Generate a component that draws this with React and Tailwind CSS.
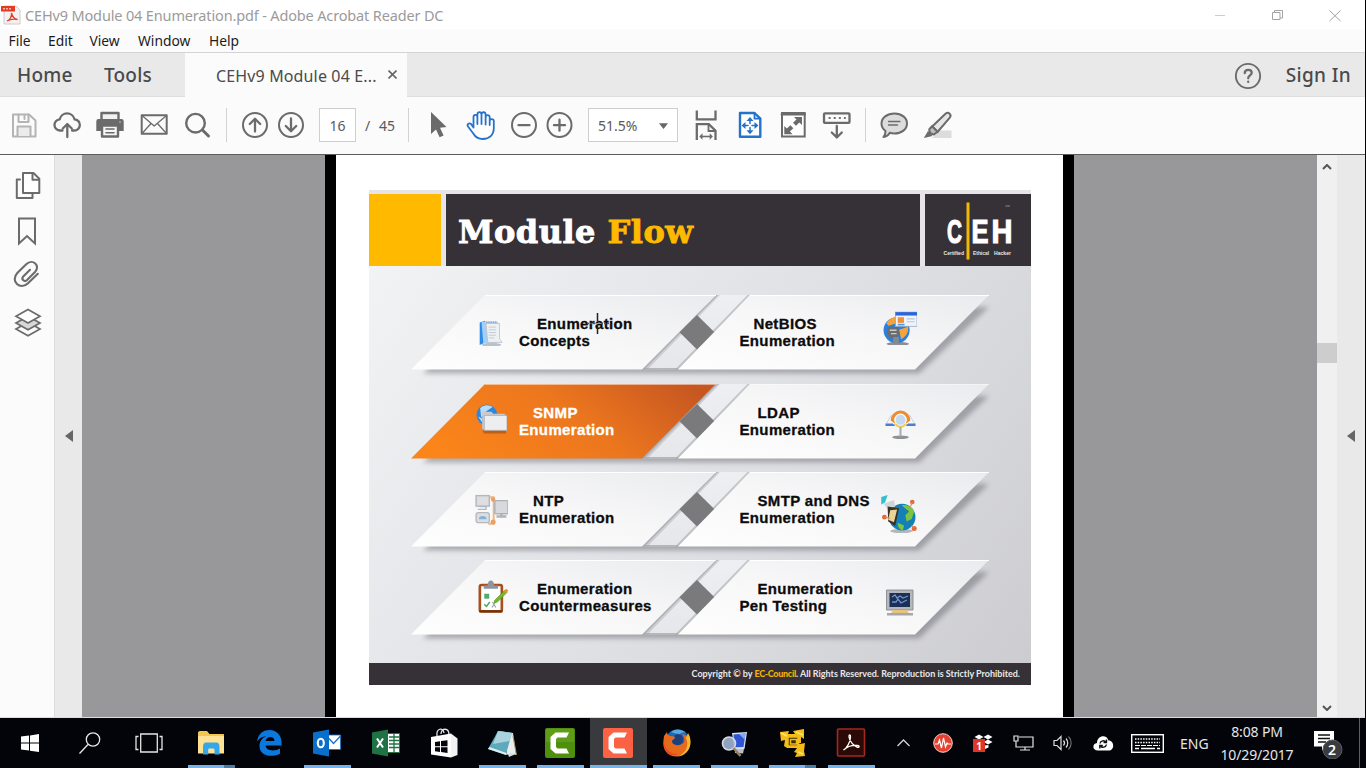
import React from "react";

const G = "#6b6b6b";

function Ico({ children, className = "", size = 30 }) {
  return (
    <svg
      className={"shrink-0 overflow-visible " + className}
      width={size}
      height={size}
      viewBox="0 0 30 30"
      fill="none"
      stroke={G}
      strokeWidth="2"
      strokeLinecap="round"
      strokeLinejoin="round"
    >
      {children}
    </svg>
  );
}

/* ---------- Window chrome ---------- */

function TitleBar() {
  return (
    <div className="flex h-[29px] items-center bg-white">
      <svg className="ml-px shrink-0" width="20" height="20" viewBox="0 0 20 20">
        <path d="M3 1h12l4 4v14H3z" fill="#f3f1f1" stroke="#cfcaca" strokeWidth="1" />
        <rect x="0" y="1" width="14" height="5.5" fill="#e23b22" />
        <path d="M2 3.8h9" stroke="#f8b5a8" strokeWidth="1.6" strokeDasharray="2 1" />
        <path d="M6 16c3-1 5-5 4.500-8c1 4 3 6 6 6.500c-4-1-7-.5-10.500 1.500z" fill="none" stroke="#e0402c" strokeWidth="1.300" />
      </svg>
      <div className="ml-1 whitespace-nowrap font-['Noto_Sans',sans-serif] text-[14.500px] leading-5 tracking-[-0.15px] text-[#9b9b9b]">
        CEHv9 Module 04 Enumeration.pdf - Adobe Acrobat Reader DC
      </div>
      <svg className="ml-auto mr-[24px] shrink-0" width="126" height="14" viewBox="0 0 126 14" fill="none" stroke="#a3a3a3">
        <path d="M0 7.500h10" stroke="#d3cccc" />
        <path d="M57.500 4.500h7.500v7h-7.500zM59.500 4.500v-2h8v7.500h-2.500" />
        <path d="M114.500 2.500l11 10.500M125.500 2.500l-11 10.500" />
      </svg>
    </div>
  );
}

function MenuBar() {
  return (
    <div className="flex h-[24px] items-center border-b border-[#d4d4d4] bg-[#fbfbfb] font-['Noto_Sans',sans-serif] text-[13.800px] leading-5 text-[#1b1b1b]">
      <span className="ml-[8.500px] w-[39.500px]">File</span>
      <span className="w-[41.500px]">Edit</span>
      <span className="w-[48.500px]">View</span>
      <span className="w-[71px]">Window</span>
      <span>Help</span>
    </div>
  );
}

function TabBar() {
  return (
    <div className="flex h-[44px] bg-[#e9e9e9] font-['Noto_Sans',sans-serif] text-[#4a4a4a]">
      <div className="flex w-[185px] items-center border-b border-[#dedede] pt-px text-[19px] font-medium">
        <span className="ml-[17px] w-[87px] tracking-[0.2px]">Home</span>
        <span className="tracking-[0.2px]">Tools</span>
      </div>
      <div className="flex w-[222px] items-center bg-[#fbfbfb] pl-[31px] pt-[2px]">
        <span className="w-[172px] whitespace-nowrap text-[16px] tracking-[0.14px]">CEHv9 Module 04 E...</span>
        <svg className="-mt-[3px]" width="9" height="9" viewBox="0 0 9 9" stroke="#666" strokeWidth="1.600">
          <path d="M.5.5l8 8M8.500.5l-8 8" />
        </svg>
      </div>
      <div className="flex flex-1 items-center justify-end border-b border-[#dedede] pt-[2px]">
        <Ico size={28}>
          <circle cx="15" cy="15" r="13" />
          <path d="M11.500 12c0-5 7.500-4.500 7.500-.5c0 2.800-3.800 3-3.800 6M15.200 21v.3" strokeWidth="2.400" />
        </Ico>
        <span className="ml-[24px] mr-[14px] text-[19px] font-medium tracking-[0.350px]">Sign In</span>
      </div>
    </div>
  );
}

function Divider({ className }) {
  return <div className={"h-[34px] w-px shrink-0 bg-[#d2d2d2] " + className} />;
}

function Toolbar() {
  return (
    <div className="flex h-[58px] items-center border-b border-[#5c5c5c] bg-[#fbfbfb] pb-px font-['Noto_Sans',sans-serif] text-[#5a5a5a]">
      <Ico className="ml-[9px]">
        <g stroke="#b4b4b4">
          <path d="M4 4.500h16l6.500 6V26.500H4z" />
          <path d="M9.500 4.500v7.500h10V4.500" />
          <path d="M15.500 6v3" />
          <path d="M8.500 26v-9.500h13V26" fill="#ececec" />
        </g>
      </Ico>
      <Ico className="ml-[13px]">
        <path d="M10.500 20.500H8.500a5.600 5.600 0 0 1-.8-11.200a7.600 7.600 0 0 1 14.800 0a5.600 5.600 0 0 1-.5 11.200h-2" strokeWidth="2.300" />
        <path d="M15.300 27V14.500M10.800 18.500l4.500-4.500l4.500 4.500" strokeWidth="2.300" />
      </Ico>
      <Ico className="ml-[13px]">
        <path d="M6.500 9.500V3h17v6.500" strokeWidth="2.400" fill="#f1f1f1" />
        <path d="M3.500 9h23a2.200 2.200 0 0 1 2.200 2.200V21H1.300v-9.800A2.200 2.200 0 0 1 3.500 9z" fill={G} stroke="none" />
        <path d="M7 15.500h16V26.500H7z" fill="#f6f6f6" strokeWidth="2.400" />
        <path d="M11 19h8M11 22.700h8" strokeWidth="1.600" />
        <circle cx="25" cy="12" r=".7" fill="#ddd" stroke="none" />
      </Ico>
      <Ico className="ml-[14px]">
        <rect x="2.700" y="5.300" width="25" height="18.500" />
        <path d="M3 5.500l12.200 10.500L27.500 5.500M3 23.500l9-10M27.500 23.500l-9-10" strokeWidth="1.300" />
      </Ico>
      <Ico className="ml-[13px]">
        <circle cx="13.500" cy="13.200" r="9.300" strokeWidth="2.400" />
        <path d="M20.500 20l6 6" strokeWidth="3" />
      </Ico>
      <Divider className="ml-[14px]" />
      <Ico className="ml-[13px]">
        <circle cx="15" cy="15" r="12" />
        <path d="M15 21.500V9M9.800 14L15 8.800l5.200 5.200" strokeWidth="2.300" />
      </Ico>
      <Ico className="ml-[6px]">
        <circle cx="15" cy="15" r="12" />
        <path d="M15 8.500V21M9.800 16l5.200 5.200l5.200-5.200" strokeWidth="2.300" />
      </Ico>
      <div className="ml-[13px] flex h-[34px] w-[37px] items-center justify-center border border-[#cfcfcf] bg-white pt-px text-[14px]">16</div>
      <div className="flex w-[52px] items-center pl-[9px] pt-px text-[14px]">
        <span className="w-[14px]">/</span>
        <span>45</span>
      </div>
      <Divider className="" />
      <Ico className="ml-[14px]">
        <path d="M8 2v22l5-4.600l3.600 7.800l4-1.800L17 17.800l6.500-.8z" fill={G} stroke="none" />
      </Ico>
      <Ico className="ml-[13px]">
        <path
          d="M7.500 17.500V7.200c0-3 3.800-3 3.900 0V14V4.500c0-3.200 4-3.200 4.100 0V14V4.500c.2-3 4-3 4.100 0V14.500V7.200c.2-2.700 3.900-2.700 4.100 0V11c.2-2.700 3.900-2.500 4.100 0V18c0 7-4.500 11-11 11c-5 0-7.500-2-9.500-5.500L2 16.500c-1.500-2.500 1.500-4 3.200-2.300l2.300 3.300M23.700 10V15"
          stroke="#2473c8"
          strokeWidth="1.800"
          fill="#fff"
        />
      </Ico>
      <Ico className="ml-[13px]">
        <circle cx="15" cy="15" r="12" />
        <path d="M9.500 15.200h11" strokeWidth="2.300" />
      </Ico>
      <Ico className="ml-[5px]">
        <circle cx="15.500" cy="15" r="12" />
        <path d="M10 15.200h11M15.500 9.700v11" strokeWidth="2.300" />
      </Ico>
      <div className="ml-[14px] flex h-[34px] w-[90px] shrink-0 items-center border border-[#cfcfcf] bg-white pl-[9px] pt-px text-[14px]">
        <span className="w-[61px]">51.5%</span>
        <svg width="9" height="6" viewBox="0 0 9 6">
          <path d="M0 .3h9L4.500 6z" fill="#666" />
        </svg>
      </div>
      <Ico className="ml-[13px]">
        <g strokeLinecap="butt" strokeLinejoin="miter">
          <path d="M5.800 .5v8.800h18.700V.5" strokeWidth="2.300" />
          <path d="M5.800 30V14.200h12l6.700 6.500V30" strokeWidth="2.300" />
          <path d="M17.500 14.500v6.500h6.500" strokeWidth="1.800" />
          <path d="M10 26.500h10" strokeWidth="1.600" />
        </g>
        <path d="M11.500 23.300v6.400L8.300 26.500zM18.700 23.300v6.400l3.200-3.200z" fill={G} stroke="none" />
      </Ico>
      <Ico className="ml-[14px]">
        <g stroke="#2473c8">
          <path d="M5 3h14.500l5.800 5.700v18H5z" fill="#fff" strokeWidth="2.400" />
          <path d="M19.500 3v5.700h5.800" strokeWidth="1.800" />
          <path d="M15 10v11M9.500 15.500h11" strokeWidth="1.500" strokeDasharray="3.500 4" />
          <path d="M15 7l-3.500 4h7zM15 24.300l-3.500-4h7zM6.500 15.600l4-3.500v7zM23.500 15.600l-4-3.500v7z" fill="#2473c8" stroke="none" />
        </g>
      </Ico>
      <Ico className="ml-[13px]">
        <rect x="4" y="3" width="22.700" height="23.500" fill="#fff" strokeLinejoin="miter" />
        <path d="M4 4.200h22.500" strokeWidth="2.600" />
        <path d="M16 7h8v8l-2.600-2.600l-3.400 3.400l-3-3l3.500-3.300zM6.300 16l2.600 2.600l3.500-3.300l2.900 2.900l-3.400 3.400l2.700 2.600H6.300z" fill={G} stroke="none" />
      </Ico>
      <Ico className="ml-[14px]">
        <rect x="2" y="3.300" width="25.500" height="9.600" rx="1" strokeWidth="2.300" />
        <path d="M7.500 8h15.500" strokeWidth="2.200" strokeDasharray=".3 4.800" />
        <path d="M14.800 16v11M9.800 22.500l5 5l5-5" strokeWidth="2.300" />
      </Ico>
      <Divider className="ml-[13px]" />
      <Ico className="ml-[13px]">
        <path d="M15.500 3.500c7.200 0 12.500 4.300 12.500 10s-5.300 10-12.500 10c-1.700 0-3.300-.2-4.700-.7c-1.500 2.500-3.600 4-6.300 4.300c1.300-1.700 2.100-3.900 2-6.100C4 19.200 2.500 16.500 2.500 13.500c0-5.700 5.500-10 13-10z" fill="#dcdcdc" />
        <path d="M9.500 11.500h11.500M9.500 15h9" strokeWidth="1.300" />
      </Ico>
      <Ico className="ml-[14px]">
        <path d="M9 28L17 20.500h11.500V28z" fill="#dcdcdc" stroke="none" />
        <path d="M9.200 16.500L22.500 3.800c3-2.500 6.500.8 4.300 3.800L14.500 22z" fill="#e6e6e6" />
        <path d="M9 16.300l-2.700 2.900c-.5 3 1.700 5.300 4.700 5.200l3.600-2.600z" fill="#bdbdbd" />
        <path d="M5 21l4.500 5L.8 28z" fill={G} stroke="none" />
      </Ico>
    </div>
  );
}

function LeftRail() {
  return (
    <div className="flex w-[54px] flex-col items-center bg-[#fbfbfb]">
      <Ico className="ml-[3px] mt-[15px]">
        <path d="M6 9.500H2.800V28H18.500v-4" />
        <path d="M9 3h10.500l5.800 5.800V23H9z" fill="#fff" />
        <path d="M18.500 3.500v6.300h6.300" />
      </Ico>
      <Ico className="mt-[16px]">
        <path d="M7 2.500h16V27.500l-8-7.500l-8 7.500z" strokeLinejoin="miter" />
      </Ico>
      <Ico className="mt-[13px]">
        <path d="M18.500 10l-7 7c-2 2.500 1.500 5.500 3.800 3.500L23.500 12.300c6-6.500-2.500-13.800-8.500-8L6 13c-8 8.500 3 18 10.500 10.500L26.300 14" transform="translate(-.5 .8)" strokeWidth="2.100" />
      </Ico>
      <Ico className="ml-px mt-[18px]">
        <g strokeWidth="1.700" strokeLinejoin="miter">
          <path d="M15 15.200l12 6.800l-12 6.800L3 22z" fill="#fbfbfb" />
          <path d="M15 9.200l12 6.800l-12 6.800L3 16z" fill="#d8d8d8" />
          <path d="M15 2.500l12 6.800l-12 6.800L3 9.300z" fill="#fff" />
        </g>
      </Ico>
    </div>
  );
}

/* ---------- Slide ---------- */

const NotesIcon = (
  <g>
    <ellipse cx="16" cy="28.500" rx="11" ry="2" fill="#b9c0c8" />
    <path d="M3 4l6-2v24l-6 3z" fill="#2f8ae8" />
    <path d="M5 3h18v24H7z" fill="#a4cff7" />
    <path d="M10 5h15v17l3 4H12z" fill="#eef0f3" stroke="#b7bcc4" strokeWidth=".8" />
    <path d="M10 3.500h12" stroke="#a5abb3" strokeWidth="2" strokeDasharray="1.500 1" />
    <path d="M13 9h8M13 12h8M13 15h8M13 18h8M13 21h6" stroke="#c3c8cf" strokeWidth="1" />
  </g>
);

const NetbiosIcon = (
  <g>
    <ellipse cx="13" cy="29" rx="10" ry="1.800" fill="#8c9094" />
    <circle cx="12" cy="17" r="11.500" fill="#2a7fe0" />
    <path d="M3 11c3-6 9-6 12-5l-4 5l-6 2zM13 17l9-3c1 5-2 9-6 11l-1-5z" fill="#f5a33a" />
    <path d="M5 14h8l2 5l-3 5H6l-3-4z" fill="#6a6c70" />
    <path d="M6 17h6M7 20h5" stroke="#ccc" strokeWidth="1.200" />
    <path d="M9 23h5v6H9z" fill="#86898d" />
    <rect x="11" y="1" width="19" height="12.500" fill="#eef4fd" stroke="#9aa7ba" strokeWidth=".7" />
    <rect x="11" y="1" width="19" height="3" fill="#2b66d8" />
    <rect x="13" y="5.500" width="5.500" height="5" fill="#f0913a" />
    <path d="M13 12h6" stroke="#49a0e8" strokeWidth="1.500" />
    <path d="M21 7h7M21 9.500h7" stroke="#b9c6da" strokeWidth="1" />
  </g>
);

const SnmpIcon = (
  <g>
    <circle cx="10.500" cy="10.500" r="10" fill="#2f86dd" />
    <path d="M4 4c4-4 9-3 12-1l-6 4l-5 6zM2 12l4 2v4z" fill="#b8dcf8" />
    <path d="M6 26h23v2.500H8z" fill="#9a4a10" opacity=".6" />
    <path d="M6 7.500h9l1.500 2H28v15H6z" fill="#c9cbcf" />
    <path d="M8 11h22v14.500H8z" fill="#eceef0" stroke="#a8abb1" strokeWidth=".8" />
  </g>
);

const NtpIcon = (
  <g>
    <path d="M12 3h5v24h-5M17 14h4" fill="none" stroke="#ecb98a" strokeWidth="1.800" />
    <circle cx="16.500" cy="5" r="2" fill="#ef9f5c" />
    <circle cx="16.500" cy="25.500" r="2.300" fill="#ef9f5c" />
    <rect x="1" y="1.500" width="12" height="9.500" fill="#dcdee2" stroke="#b4b7bc" strokeWidth="1.300" />
    <path d="M4 11.500h6v2.500H2.500" stroke="#b4b7bc" strokeWidth="1.300" fill="none" />
    <rect x="1" y="17" width="12" height="9" rx="2" fill="#dcdee2" stroke="#b4b7bc" strokeWidth="1.200" />
    <path d="M3.500 23a3.500 3 0 0 1 7 0z" fill="#86b2da" />
    <rect x="18" y="6" width="12" height="12" rx="1" fill="#d7d9dd" stroke="#aeb1b6" strokeWidth="1.300" />
    <path d="M19.500 20.500h9M24 18v3" stroke="#b0b3b8" strokeWidth="2.400" />
  </g>
);

const ClipIcon = (
  <g>
    <rect x="3.500" y="4.500" width="20" height="24" rx="1.500" fill="#fff" stroke="#a5501e" strokeWidth="2.400" />
    <path d="M3 28.500h21" stroke="#70330f" strokeWidth="2" />
    <path d="M7 8V5h3.500c0-6 6-6 6 0H20v3z" fill="#8f959b" />
    <rect x="7.500" y="12.500" width="4.500" height="4.500" fill="#4fae6d" />
    <path d="M7.500 22l2 2l3-4" stroke="#49a35c" strokeWidth="1.300" fill="none" />
    <path d="M14.500 25l5-8M15 20l3 5" stroke="#9aa0a5" strokeWidth="1" />
    <path d="M17 18.500L26.500 9l2 2L19.500 20l-3 .8z" fill="#74b92d" stroke="#4d8a1c" strokeWidth=".5" />
    <path d="M25 10.500l2.500-2.500l1.800 1.800L27 12z" fill="#f28a2e" />
  </g>
);

const LdapIcon = (
  <g>
    <ellipse cx="15" cy="28.300" rx="8" ry="1.700" fill="#8e9195" />
    <path d="M1 16L6 7h18l5 9z" fill="#f6f7f9" stroke="#c3c8d0" strokeWidth=".8" />
    <path d="M.5 15h7l2.500 2.500h10l2.500-2.500H29.500v2.500H.5z" fill="#4a7fd0" />
    <path d="M5.500 12a9.500 9.500 0 1 1 19 0l-4 3H9.500z" fill="#ee8d2f" />
    <circle cx="15" cy="11.500" r="5.500" fill="#c5daf0" stroke="#fff" strokeWidth="1.200" />
    <path d="M10.500 15.500c2 3.500 7 3.500 9 0" stroke="#f1cf4a" strokeWidth="2" fill="none" />
    <path d="M15 18v9.500" stroke="#a9adb3" strokeWidth="2" />
  </g>
);

const SmtpIcon = (
  <g>
    <ellipse cx="17" cy="28.500" rx="9" ry="1.700" fill="#b3b7bb" />
    <circle cx="17.500" cy="17.500" r="10.500" fill="#157fb8" />
    <path d="M17 8c5-1 9 2 10 5l-2 6l-4 2l-1-5l3-3zM14 22l5 2l-1 4c-2-.5-4-2-4-6z" fill="#7cc540" />
    <path d="M1 1.500l5-1.500l-2 6l-3 1.500z" fill="#2fc2cc" />
    <path d="M3 7l8-3l1 5l-6 2z" fill="#cfd4d9" />
    <path d="M6 9l9 1.500l-3 14L6.500 21z" fill="#3a3126" />
    <path d="M8 12l5.500-.5l-2.500 10l-4.500-2z" fill="#ecd398" />
    <circle cx="25.500" cy="5.500" r="1.800" fill="#e56a33" />
    <circle cx="3.500" cy="17.500" r="1.900" fill="#e56a33" />
    <circle cx="27" cy="26.500" r="2" fill="#e56a33" />
    <path d="M24 9l1.500-3M25 24l2 2M4 17.500l4 1" stroke="#d98a5c" strokeWidth=".9" />
  </g>
);

const PcIcon = (
  <g>
    <path d="M1.500 2h26.500v20H1.500z" fill="#b5b8bd" stroke="#7e8187" strokeWidth=".8" />
    <rect x="4.500" y="5" width="20.500" height="14" fill="#1c2f55" />
    <path d="M7 9l3-2l2 3l3-2l3 2l5-2M7 14h4l2-3l3 4l6-3" stroke="#6f93cf" strokeWidth="1.300" fill="none" />
    <path d="M8 22h14l2 3H6z" fill="#e8c47a" />
    <path d="M2 25h26v2.500H2z" fill="#a4a7ac" />
  </g>
);

function Copy({ text, dark = true }) {
  return (
    <div
      className={
        "whitespace-pre font-['Liberation_Sans',Arial,sans-serif] text-[15px] font-bold leading-[17px] tracking-[0.35px] [-webkit-text-stroke:0.3px] " +
        (dark ? "text-[#0c0c0c]" : "text-white")
      }
    >
      {text}
    </div>
  );
}

const ROWS = [
  { l: ["Enumeration", "Concepts"], li: "pl-[18px]", r: ["NetBIOS", "Enumeration"], ri: "pl-[14px]", a: NotesIcon, b: NetbiosIcon, ap: [108, 24, 27], bp: [514, 16, 34] },
  { l: ["SNMP", "Enumeration"], li: "pl-[14px]", r: ["LDAP", "Enumeration"], ri: "pl-[18px]", a: SnmpIcon, b: LdapIcon, ap: [107, 20, 31], bp: [516, 24, 31], hot: true },
  { l: ["NTP", "Enumeration"], li: "pl-[14px]", r: ["SMTP and DNS", "Enumeration"], ri: "pl-[18px]", a: NtpIcon, b: SmtpIcon, ap: [106, 22, 33], bp: [511, 23, 38] },
  { l: ["Enumeration", "Countermeasures"], li: "pl-[18px]", r: ["Enumeration", "Pen Testing"], ri: "pl-[18px]", a: ClipIcon, b: PcIcon, ap: [107, 20, 33], bp: [516, 28, 30] },
];

function Banner({ row }) {
  return (
    <div className="relative h-[88.400px] shrink-0">
      <svg className="absolute left-0 top-0 overflow-visible" width="662" height="88" viewBox="0 0 662 88">
        <path d="M54 78.500L120 12H620L550 78.500z" fill="#55555e" opacity=".42" filter="url(#soft)" />
        <path d="M347 0h34L309 74.500h-36z" fill="url(#strip)" />
        <path d="M347 0l-74 74.500h5.500L351 0z" fill="#a3a4a9" opacity=".4" />
        <path d="M347 0l-74 74.500h2.500L349 0zM381 0l-72 74.500h-3L378.500 0z" fill="#85868b" opacity=".4" />
        <path d="M273 73.800h36" stroke="#a5a6aa" strokeWidth="1.300" />
        <path d="M328 20l17.500 17.300L328 54.500L310.500 37.300z" fill="#7a7a7d" />
        <path d="M116 0h231L273 74.500H42z" fill={row.hot ? "url(#hot)" : "url(#cold)"} />
        <path d="M381 0h239L546 74.500H309z" fill="url(#cold)" />
        <path d="M116 .5h231M381 .5h239" stroke="#fff" strokeWidth="1" opacity={row.hot ? ".5" : "1"} />
        <svg x={row.ap[0]} y={row.ap[1]} width={row.ap[2]} height={row.ap[2]} viewBox="0 0 30 30">{row.a}</svg>
        <svg x={row.bp[0]} y={row.bp[1]} width={row.bp[2]} height={row.bp[2]} viewBox="0 0 30 30">{row.b}</svg>
      </svg>
      <div className="relative flex pl-[150px] pt-[20px]">
        <div className="w-[220.500px]">
          <div className={row.li}><Copy text={row.l[0]} dark={!row.hot} /></div>
          <Copy text={row.l[1]} dark={!row.hot} />
        </div>
        <div>
          <div className={row.ri}><Copy text={row.r[0]} /></div>
          <Copy text={row.r[1]} />
        </div>
      </div>
    </div>
  );
}

function CehLogo() {
  return (
    <svg width="106" height="72" viewBox="0 0 106 72" className="font-['Liberation_Sans',Arial,sans-serif] font-bold">
      <g fill="#fff" stroke="#fff" strokeWidth="1.200" fontSize="34">
        <text x="22" y="49" textLength="15" lengthAdjust="spacingAndGlyphs">C</text>
        <text x="46.500" y="49" textLength="17" lengthAdjust="spacingAndGlyphs">E</text>
        <text x="66.500" y="49" textLength="21" lengthAdjust="spacingAndGlyphs">H</text>
      </g>
      <path d="M43 8.500v57" stroke="#f5b800" strokeWidth="3" />
      <g fill="#e8e8e8" fontSize="5">
        <text x="18.500" y="61" textLength="20.500" lengthAdjust="spacingAndGlyphs">Certified</text>
        <text x="48" y="61" textLength="16" lengthAdjust="spacingAndGlyphs">Ethical</text>
        <text x="69" y="61" textLength="17" lengthAdjust="spacingAndGlyphs">Hacker</text>
      </g>
      <path d="M80.500 12h4.500" stroke="#8c8a8e" />
    </svg>
  );
}

function Slide() {
  return (
    <div className="relative flex h-[495px] w-[662px] flex-col bg-[linear-gradient(125deg,#f4f5f6_0%,#e6e7ea_35%,#dbdce0_65%,#cbcbd0_100%)]">
      <svg className="absolute" width="0" height="0">
        <defs>
          <filter id="soft" x="-5%" y="-20%" width="110%" height="150%"><feGaussianBlur stdDeviation="2.500" /></filter>
          <linearGradient id="cold" x1="0" y1="1" x2="1" y2="0">
            <stop offset="0" stopColor="#fefefe" /><stop offset=".5" stopColor="#f7f7f8" /><stop offset="1" stopColor="#eaebee" />
          </linearGradient>
          <linearGradient id="hot" x1="0" y1=".6" x2="1" y2=".3">
            <stop offset="0" stopColor="#fb8519" /><stop offset=".55" stopColor="#ec761e" /><stop offset="1" stopColor="#c65721" />
          </linearGradient>
          <linearGradient id="strip" x1="0" y1="0" x2="0" y2="1">
            <stop offset="0" stopColor="#eeeff2" /><stop offset="1" stopColor="#e6e7ea" />
          </linearGradient>
        </defs>
      </svg>
      <div className="flex h-[76px] shrink-0 gap-[5px] bg-[#e6e4e9] pt-[4px]">
        <div className="w-[72px] bg-[#ffba00]" />
        <div className="flex w-[474px] items-center bg-[#353137] pl-[12px] pt-[4px]">
          <h1 className="whitespace-nowrap font-['DejaVu_Serif',serif] text-[32px] font-bold leading-10 tracking-[0.5px] text-white [-webkit-text-stroke:0.9px]">
            Module <span className="text-[#ffba00]">Flow</span>
          </h1>
        </div>
        <div className="w-[106px] bg-[#353137]"><CehLogo /></div>
      </div>
      <div className="flex flex-1 flex-col pt-[29.300px]">
        {ROWS.map((row, i) => <Banner key={i} row={row} />)}
      </div>
      <div className="flex h-[22px] shrink-0 items-center justify-end whitespace-pre bg-[#353137] pr-[11px] font-['Lato',sans-serif] text-[9px] font-bold tracking-[-0.01px] text-[#e9e9e9]">
        Copyright © by <span className="font-['Lato',sans-serif] font-black tracking-[-0.3px] text-[#f5b000]">EC-Council</span>. All Rights Reserved. Reproduction is Strictly Prohibited.
      </div>
      <svg className="absolute left-[218px] top-[123px]" width="24" height="23" viewBox="0 0 24 23" stroke="#222">
        <path d="M10.500 0v8M10.500 13v8" strokeWidth="1.500" />
        <path d="M0 10.500h8M14 10.500h9" stroke="#555" strokeWidth="1.500" strokeDasharray="2 1" />
        <path d="M8 10.500h6" stroke="#999" />
      </svg>
    </div>
  );
}

function Viewer() {
  return (
    <div className="flex h-[563px] border-b border-[#dcdcdc] bg-[#e9e9e9]">
      <LeftRail />
      <div className="flex w-[28px] items-center justify-center border-l border-[#dcdcdc]">
        <svg width="8" height="12" viewBox="0 0 8 12"><path d="M8 0v12L0 6z" fill="#666" /></svg>
      </div>
      <div className="flex w-[1235px] bg-[#98989a] pl-[243px]">
        <div className="flex w-[749px] border-x-[11px] border-black bg-white pl-[33px] pt-[35px]">
          <Slide />
        </div>
      </div>
      <div className="flex w-[20px] flex-col items-center bg-[#f0f0f0] pb-[6px] pt-[9px]">
        <svg width="10" height="6" viewBox="0 0 10 6" fill="none" stroke="#555" strokeWidth="2"><path d="M1 5l4-4l4 4" /></svg>
        <div className="mt-[173px] h-[20px] w-full bg-[#cdcdcd]" />
        <svg className="mt-auto" width="10" height="6" viewBox="0 0 10 6" fill="none" stroke="#555" strokeWidth="2"><path d="M1 1l4 4l4-4" /></svg>
      </div>
      <div className="flex flex-1 items-center justify-center">
        <svg width="8" height="12" viewBox="0 0 8 12"><path d="M8 0v12L0 6z" fill="#666" /></svg>
      </div>
    </div>
  );
}

/* ---------- Taskbar ---------- */

function Task({ children, open, split, active }) {
  return (
    <div className={"flex w-[58.200px] shrink-0 flex-col items-center " + (active ? "bg-[#393a3d] bg-clip-content px-px" : "")}>
      <div className="flex h-[47px] items-center pt-[3px]">
        <svg width="30" height="30" viewBox="0 0 30 30" fill="none">{children}</svg>
      </div>
      {open && (
        <div className={"flex h-[3px] justify-end bg-[#76b3e8] " + (active ? "w-full" : "w-[47px]")}>
          {split && <div className="w-[11px] bg-[#4b7ca8]" />}
        </div>
      )}
    </div>
  );
}

function Taskbar() {
  return (
    <div className="flex h-[50px] bg-[#03040a] text-white">
      <div className="flex w-[182px] shrink-0 items-center">
        <svg className="ml-[21px]" width="18" height="18" viewBox="0 0 18 18" fill="#fff">
          <path d="M0 2.600l8-1.100v7H0zM9 1.400L18 0v8.500H9zM0 9.500h8v7l-8-1.100zM9 9.500h9V18l-9-1.300z" />
        </svg>
        <svg className="ml-[40px]" width="22" height="22" viewBox="0 0 22 22" fill="none" stroke="#e8e8e8" strokeWidth="1.300">
          <circle cx="14" cy="7.500" r="6.700" /><path d="M9 12.500L.5 21.500" />
        </svg>
        <svg className="ml-[34px]" width="28" height="20" viewBox="0 0 28 20" fill="none" stroke="#e5e5e5" strokeWidth="1.300">
          <path d="M5.700 1h16.600v18H5.700zM3.500 3.500H1v13h2.500M24.500 3.500h2.500v13h-2.500" />
        </svg>
      </div>
      <Task open split>
        <path d="M2 5c0-1 .5-2 2-2h7l2.500 3H27c1 0 1 .5 1 1v18H2z" fill="#f3c64f" />
        <path d="M2 8h26v17.500H2z" fill="#ffe294" />
        <path d="M7 26.500V19c0-3 1-4.500 3-4.500h10.500c2 0 3 1.500 3 4.500v7.500h-5V22c0-1-.5-1.500-1.300-1.500h-3.700c-.8 0-1.300.5-1.300 1.500v4.500z" fill="#35a7e6" />
      </Task>
      <Task>
        <path d="M3 13.500C4.500 5 9.500 2 15.500 2C23 2 27.500 8 27.500 14v3.500H11.500c.3 5 8.500 6.500 14.500 3v5.300C17.500 30 5.500 28 5.500 18c0-5 3-8 6.500-9.700C8.500 8.500 5.500 10 3 13.500zM11.500 13h9c0-5.500-8-5.500-9 0z" fill="#0a78dc" />
      </Task>
      <Task open>
        <path d="M13 7h15.500v14.500H13z" fill="#fff" stroke="#1770c4" strokeWidth=".8" />
        <path d="M17 10.500l4.500 5L28.500 8" stroke="#1770c4" strokeWidth="1.300" />
        <path d="M1 4.500L17 1.500v27L1 25.500z" fill="#0a6fca" />
        <ellipse cx="8.800" cy="15" rx="3" ry="4.300" stroke="#fff" strokeWidth="2.100" />
      </Task>
      <Task>
        <path d="M14 5.500h14.500v19H14z" fill="#fff" stroke="#1f7244" />
        <path d="M18 9h10M18 12.500h10M18 16h10M18 19.500h10M23 6v18" stroke="#1f7244" strokeWidth="1.300" />
        <path d="M1 4.500L17 1.500v27L1 25.500z" fill="#1f7244" />
        <path d="M6 10.500l6 9M12 10.500l-6 9" stroke="#fff" strokeWidth="2" />
      </Task>
      <Task>
        <path d="M8 8C7 0 14-1 15 5M12 6c0-6 8-7 8 1" stroke="#e8e8e8" strokeWidth="1.300" />
        <path d="M2 9L22 5.500v24L2 26.500z" fill="#fff" />
        <path d="M22 5.500l6.500 5V27L22 29.500z" fill="#f2f2f2" />
        <path d="M6 14l5-.7v4.900H6zM12 13l6.500-.8v6H12zM6 19.200h5V24l-5-.7zM12 19.200h6.500v5.700L12 24z" fill="#05060b" />
      </Task>
      <Task open>
        <path d="M12 3l14 2l3 21l-7 3z" fill="#cfdbe0" />
        <path d="M11 3l14 2l-6 22L1 21z" fill="#5fa9bc" />
        <path d="M11 3l14 2l-2.500 8L6 16z" fill="#a9d3dd" />
        <path d="M1 21l18 6l.5-2L2.500 19z" fill="#d8eef2" />
        <path d="M25 5l-6 22l6-2l4 2z" fill="#e9ecec" />
        <path d="M26 8l3.500 19" stroke="#a98d57" strokeWidth="1" />
      </Task>
      <Task open>
        <rect x="0" y="0" width="30" height="30" rx="2" fill="#4f8f0e" />
        <path d="M1 1h28v13H1z" fill="#66a31c" opacity=".7" />
        <path d="M24 4.500l-2.500 5H12.500L11 11v8l1.500 1.500H21.500l2.500 5H10.500l-5-4.500V9l5-4.500z" fill="#fff" />
      </Task>
      <Task open active>
        <rect x="0" y="0" width="30" height="30" rx="2" fill="#fb6143" />
        <path d="M24 4.500l-2.500 5H12.500L11 11v8l1.500 1.500H21.500l2.500 5H10.500l-5-4.500V9l5-4.500z" fill="#fff" />
      </Task>
      <Task open>
        <circle cx="15.500" cy="14" r="12.500" fill="#2067b5" />
        <path d="M9 4c4-4 12-3 15 1c-3-1-5 0-6 1c-4 0-6-1-9-2z" fill="#57a9df" />
        <path d="M2 8l3-4c0 2 1 3 3 4l5 .5c1 2-2 3-3 4c3 6 9 5 12 2c1-3 0-6-2-9c7 3 6 6 7 2c3 8 0 20-11 21C5 29 0 21 1.500 12z" fill="#e66a1c" />
        <path d="M26 5c5 8 3 21-9 23c8-4 10-12 7-18z" fill="#fbb52c" />
        <path d="M2 14c1 8 7 12 14 12c-8 4-15-2-14-12z" fill="#f0471f" />
        <path d="M12 8c3-3 8-2 9 2c1 5-3 8-7 7c-3-1-4-2-4-4c1-1 3-2 3-3.500z" fill="#1d3f7c" />
      </Task>
      <Task open>
        <path d="M12 5l15-1l-2.500 17l-10 .5z" fill="#d8dfec" />
        <path d="M13.500 6.500l12-1l-2 13.500l-9 .3z" fill="#2d55d4" />
        <path d="M19 6l6.500-.5l-1 6z" fill="#86a7f4" />
        <path d="M15 21h9l-1 4.500l-8-.5z" fill="#b9bec8" />
        <circle cx="9" cy="15.500" r="6.500" fill="#a9bede" fillOpacity=".85" stroke="#d5dae2" strokeWidth="1.600" />
        <path d="M13.500 20l7 8" stroke="#9a8467" strokeWidth="2.500" />
      </Task>
      <Task open split>
        <path d="M2 4l9-1l-1 3h7l-2-3l11-2v10l-3-2v6h-3V9H10v9h9v-4l3 2l5-1l-1 8l1 5l-10 1l2-4l-3-1l3-4H9l-3-2l1-6l-4 1z" fill="#f4bd17" />
        <path d="M10 9h10v9H10z" fill="#3a2f08" />
        <path d="M10 9h10v9H10zM12.500 11.500h6v4.500h-6z" stroke="#f4bd17" strokeWidth="1.500" />
        <path d="M3 5l6 3M18 4l7 3M20 24l5 2" stroke="#ffe56b" strokeWidth="1.500" />
      </Task>
      <Task open>
        <rect x="1.500" y="1" width="27" height="27" rx="1" fill="#2a0907" stroke="#a5281c" strokeWidth="1.600" />
        <path d="M7.500 22c3-1.500 7-8 7-13c0-3-1.800-2.500-1.500 0c.5 4.500 5 9 8.500 10.300c2 .4 2.300-1.500 0-1.800c-4-.5-9.500.5-14 4.500z" stroke="#fff" strokeWidth="1.300" />
      </Task>
      <Tray />
    </div>
  );
}

function Tray() {
  return (
    <div className="ml-auto flex w-[485px] shrink-0 items-center font-['Noto_Sans',sans-serif]">
      <svg className="ml-[16px] shrink-0" width="13" height="8" viewBox="0 0 13 8" fill="none" stroke="#d4d4d4" strokeWidth="1.300"><path d="M.5 7l6-6l6 6" /></svg>
      <svg className="ml-[23px] shrink-0" width="20" height="20" viewBox="0 0 20 20" fill="none">
        <circle cx="10" cy="10" r="9.300" fill="#e8402f" stroke="#f7d5cf" strokeWidth="1" />
        <path d="M2 11h3l1.500-4l2 8l2-10l2 9l1.500-4l1 1h3" stroke="#fff" strokeWidth="1.200" />
      </svg>
      <div className="relative ml-[20px] h-[20px] w-[20px] shrink-0">
        <svg width="20" height="20" viewBox="0 0 20 20" fill="#fff">
          <path d="M6 1.500l4.500 2.500L6 6.500L1.500 4zM15 1.500L19.500 4L15 6.500L10.500 4zM15 6.500L19.500 9L15 11.500L10.500 9zM15.500 12v2.500L11 16.500v-4z" />
        </svg>
        <div className="absolute left-0 top-[6px] flex h-[13px] w-[12px] items-center justify-center bg-[#e0352b] text-[10px] font-bold leading-none">1</div>
      </div>
      <svg className="ml-[20px] shrink-0" width="21" height="16" viewBox="0 0 21 16" fill="none" stroke="#e5e5e5" strokeWidth="1.200">
        <path d="M6 2h14v10H3V8M1 1h4v5H1zM3 6v3M12 12v3M7 15h10" />
      </svg>
      <svg className="ml-[19px] shrink-0" width="20" height="16" viewBox="0 0 20 16" fill="none" stroke="#dcdcdc" strokeWidth="1.200">
        <path d="M1 5.500h3L8 1.500v13L4 10.500H1zM10.500 5.500c1.300 1.500 1.300 3.500 0 5M13 3.500c2.300 2.500 2.300 6.500 0 9" /><path d="M15.500 1.500c3.500 3.500 3.500 9.500 0 13" stroke="#6d6d6d" />
      </svg>
      <svg className="ml-[20px] shrink-0" width="21" height="16" viewBox="0 0 21 16" fill="none">
        <path d="M5 15.500C-1 15.500-1 8.500 4 8C4 0 14-1 15.500 5.500c6 0 6.500 10 0 10z" fill="#fff" />
        <path d="M7 8.500c.5-3 4.500-3.500 6-1.500M13.500 9.500c-.5 3-4.500 3.500-6 1.500M13.500 4.500v3h-3M6.800 13.500v-3h3" stroke="#111" strokeWidth="1.400" />
      </svg>
      <svg className="ml-[17px] shrink-0" width="33" height="19" viewBox="0 0 33 19" fill="none" stroke="#fff">
        <rect x=".7" y=".7" width="31.600" height="17.600" strokeWidth="1.400" />
        <path d="M4 5h25M4 8.500h25" strokeWidth="1.600" strokeDasharray="1.500 1.200" /><path d="M4 11.500h25" strokeWidth="1" strokeDasharray="5 1" /><path d="M4 14.500h4M10 14.500h14M26 14.500h3" strokeWidth="1.600" />
      </svg>
      <span className="ml-[16px] w-[34px] shrink-0 text-[14px] text-[#e6e6e6]">ENG</span>
      <div className="ml-[1px] flex w-[84px] shrink-0 flex-col items-center whitespace-nowrap text-[14px] leading-[23px] tracking-[-0.15px] text-[#e6e6e6]">
        <span>8:08 PM</span>
        <span>10/29/2017</span>
      </div>
      <div className="relative ml-[15px] h-[32px] w-[30px] shrink-0">
        <svg width="30" height="32" viewBox="0 0 30 32">
          <path d="M0 4h20v15.500h-9L8 24v-4.500H0z" fill="#fff" />
          <path d="M4 8h12M4 11.500h12M4 15h8" stroke="#111" strokeWidth="1.300" />
          <circle cx="18.500" cy="22.500" r="9.500" fill="#3a3b3f" stroke="#5c5d61" strokeWidth="1" />
        </svg>
        <span className="absolute left-[14px] top-[13px] text-[14px] font-semibold leading-5">2</span>
      </div>
      <div className="ml-auto mr-[6px] h-[50px] w-px bg-[#5d5e62]" />
    </div>
  );
}

export default function App() {
  return (
    <div className="flex h-[768px] w-[1366px] flex-col overflow-hidden bg-[#03040a]">
      <div className="border-r border-black">
        <TitleBar />
        <MenuBar />
        <TabBar />
        <Toolbar />
        <Viewer />
      </div>
      <Taskbar />
    </div>
  );
}
